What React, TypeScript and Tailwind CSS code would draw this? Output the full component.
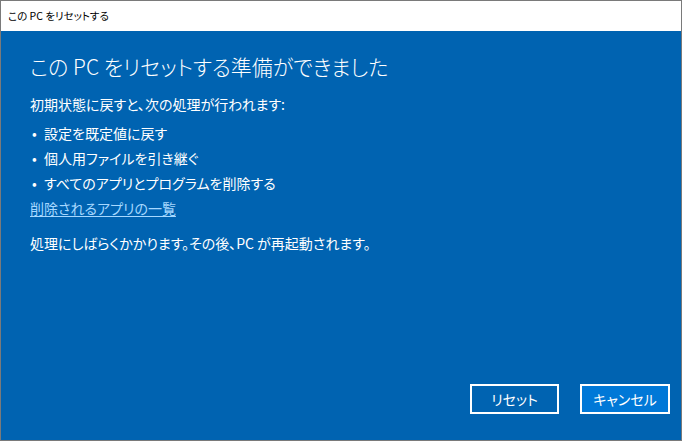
import React from "react";

const jp = { fontFamily: '"Noto Sans CJK JP", "Noto Sans", sans-serif' };

export default function App() {
  return (
    <div
      className="w-[682px] h-[441px] border border-[#7a7a7a] flex flex-col overflow-hidden bg-[#0063b1] [font-feature-settings:'palt']"
      style={jp}
    >
      <div className="h-[30px] bg-white flex items-center pl-[7px] text-[10.5px] text-black shrink-0">
        この PC をリセットする
      </div>
      <div className="flex-1 flex flex-col text-white pl-[29px] pr-[11px]">
        <div className="mt-[18px] text-[21px] font-light leading-[34px]">
          この PC をリセットする準備ができました
        </div>
        <div className="mt-[9px] flex flex-col text-[14px] leading-[25px]">
          <div>初期状態に戻すと、次の処理が行われます:</div>
          <div className="flex mt-[4px]">
            <span className="w-[14px] pl-[2px]">•</span>
            <span>設定を既定値に戻す</span>
          </div>
          <div className="flex">
            <span className="w-[14px] pl-[2px]">•</span>
            <span>個人用ファイルを引き継ぐ</span>
          </div>
          <div className="flex">
            <span className="w-[14px] pl-[2px]">•</span>
            <span>すべてのアプリとプログラムを削除する</span>
          </div>
          <div>
            <span className="text-[#a6d8ff] underline underline-offset-2">削除されるアプリの一覧</span>
          </div>
          <div className="mt-[10px]">処理にしばらくかかります。その後、PC が再起動されます。</div>
        </div>
        <div className="flex-1" />
        <div className="flex justify-end gap-[21px] mb-[26px]">
          <button className="w-[89px] h-[30px] border-2 border-white bg-[#0063b1] text-white text-[14px] flex items-center justify-center">
            リセット
          </button>
          <button className="w-[90px] h-[30px] border-2 border-white bg-[#0078d7] text-white text-[14px] flex items-center justify-center">
            キャンセル
          </button>
        </div>
      </div>
    </div>
  );
}
